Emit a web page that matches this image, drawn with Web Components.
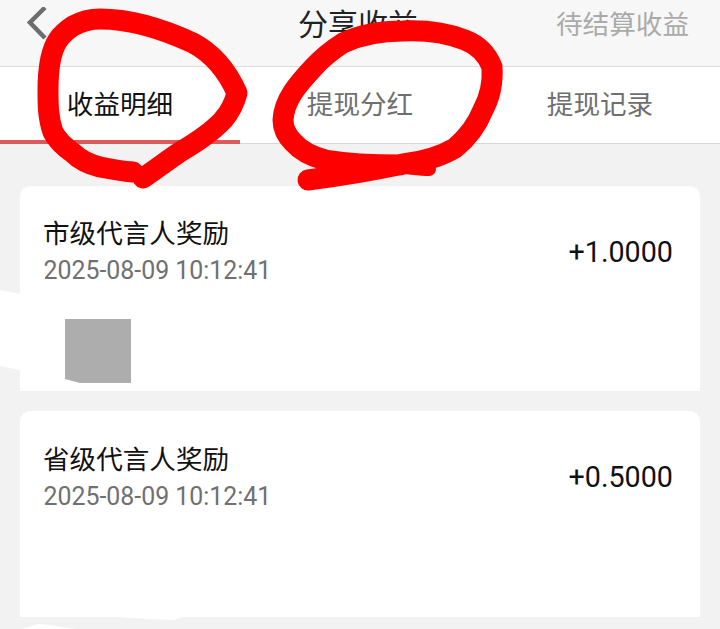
<!DOCTYPE html>
<html lang="zh"><head><meta charset="utf-8"><title>分享收益</title>
<style>
html,body{margin:0;padding:0;background:#f2f2f2;height:629px;overflow:hidden}
body{position:relative;font-family:Roboto,"Noto Sans CJK SC",sans-serif}
</style></head><body>
<x-nav title-text="分享收益" action="待结算收益"></x-nav>
<x-tabs></x-tabs>
<x-list>
<x-card heading="市级代言人奖励" time="2025-08-09 10:12:41" amount="+1.0000" thumb></x-card>
<x-card tall heading="省级代言人奖励" time="2025-08-09 10:12:41" amount="+0.5000"></x-card>
</x-list>
<x-marks></x-marks>
<script>
const F='Roboto,"Noto Sans CJK SC",sans-serif';
function def(name,render){customElements.define(name,class extends HTMLElement{connectedCallback(){if(!this.shadowRoot){this.attachShadow({mode:'open'}).innerHTML=render(this)}}})}
def('x-nav',e=>`<style>
:host{display:grid;grid-template-columns:1fr auto 1fr;align-items:center;height:67px;box-sizing:border-box;background:#f7f7f7;border-bottom:1px solid #dcdcdc;padding:0 31px 17px 27px;font-family:${F}}
svg{display:block}
.t{font-size:30px;line-height:40px;color:#222}
.a{justify-self:end;font-size:26.6px;line-height:40px;color:#aaa}
</style><svg width="24" height="36" viewBox="0 0 24 36"><path d="M18 0.5 3 15.5 18 31" fill="none" stroke="#6e6e6e" stroke-width="4.5"/></svg><div class="t">${e.getAttribute('title-text')}</div><div class="a">${e.getAttribute('action')}</div>`);
def('x-tabs',()=>`<style>
:host{display:grid;grid-template-columns:repeat(3,240px);height:77px;box-sizing:border-box;background:#fff;border-bottom:1px solid #d6d6d6;font-family:${F}}
div{display:flex;align-items:center;justify-content:center;font-size:26.6px;color:#6f6f6f;padding-bottom:7px;box-sizing:border-box;height:77px}
.on{color:#111;border-bottom:4px solid #dc5a5a;padding-bottom:3px}
</style><div class="on">收益明细</div><div>提现分红</div><div>提现记录</div>`);
def('x-list',()=>`<style>:host{display:flex;flex-direction:column;gap:20px;padding:42px 20px 0}</style><slot></slot>`);
def('x-card',e=>`<style>
:host{display:block;height:205px;background:#fff;border-radius:10px 10px 0 0;padding:29px 27px 0 24px;box-sizing:border-box;font-family:${F}}
:host([tall]){height:206px;padding-top:30px}
:host([tall]) .m{margin-top:16px}
.r{display:flex;justify-content:space-between;align-items:flex-start}
.h{font-size:26.6px;line-height:37px;color:#111;margin-left:-1px}
.d{font-size:24.9px;line-height:37px;color:#707070;margin-left:-.5px}
.m{font-size:28.7px;line-height:40px;color:#111;margin-top:17px}
.th{width:66px;height:64px;background:#adadad;margin:30px 0 0 21px}
</style><div class="r"><div><div class="h">${e.getAttribute('heading')}</div><div class="d">${e.getAttribute('time')}</div></div><div class="m">${e.getAttribute('amount')}</div></div>${e.hasAttribute('thumb')?'<div class="th"></div>':''}`);
def('x-marks',()=>`<style>:host{position:absolute;left:0;top:0;width:720px;height:629px;pointer-events:none}svg{display:block}</style>
<svg width="720" height="629" viewBox="0 0 720 629">
<path fill="#fff" d="M0 290 20 294 V370 L65 379 80 383 H20 L20 370 0 366Z"/>
<path fill="#fff" d="M117 617 150 619 175 620 182 617Z"/>
<path fill="#fff" d="M22 629 38 624 50 625 76 629Z"/>
<g fill="none" stroke="#fe0000" stroke-linecap="round" stroke-linejoin="round">
<path stroke-width="21" d="M133 172C120 171 110 169 100 167C88 164 80 160 73 153C63 146 57 140 53 132C48 118 48 104 48 90C48 70 50 52 58 40C62 34 67 30 73 26C82 21 90 19 100 19C130 19 165 30 193 43C210 52 225 66 237 93C234 105 230 112 223 120C212 132 197 142 180 152C168 160 155 170 143 178"/>
<path stroke-width="14" d="M405 167C415 168 422 169 429 169"/>
<path stroke-width="21" d="M400 165C375 165 350 164 325 160C310 156 300 150 293 142C286 135 283 128 283 120C284 100 298 84 313 68C322 58 332 50 343 43C360 35 380 31 403 31C425 30 447 33 465 40C478 45 487 54 492 67C493 82 490 97 483 110C477 125 467 138 455 148C440 157 420 162 403 164C375 170 340 176 308 180"/>
</g></svg>`);
</script></body></html>
